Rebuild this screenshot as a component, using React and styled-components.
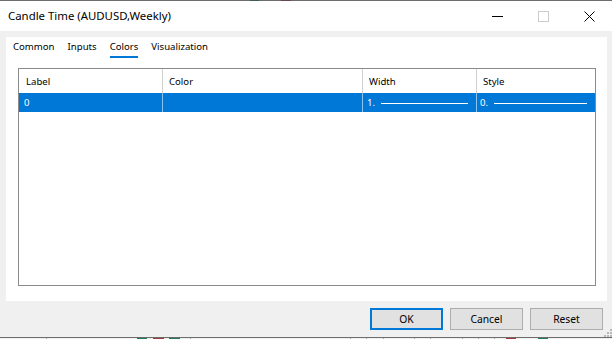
import React from "react"
import styled, { createGlobalStyle } from "styled-components"

const GlobalStyle = createGlobalStyle`
    html, body {
        margin: 0;
        padding: 0;
        background: #f0f0f0;
    }
    * {
        box-sizing: border-box;
    }
`

const Screen = styled.div`
    width: 612px;
    height: 339px;
    overflow: hidden;
    display: flex;
    flex-direction: column;
    background: #f0f0f0;
    font-family: "Noto Sans", "Open Sans", sans-serif;
    font-size: 9.6px;
    color: #000;
`

const EdgeLine = styled.div`
    height: 1px;
    flex: none;
    display: flex;
    background: #6d6d6d;
`

const TitleBar = styled.div`
    height: 30px;
    flex: none;
    display: flex;
    align-items: center;
    background: #fff;
    padding-left: 8px;
`

const Title = styled.span`
    flex: 1;
    font-size: 11.4px;
    padding-bottom: 1px;
`

const WinButton = styled.div`
    width: 46px;
    height: 30px;
    display: flex;
    align-items: center;
    justify-content: center;
`

const Body = styled.div`
    flex: 1;
    display: flex;
    flex-direction: column;
    padding: 6px 5px 0 6px;
`

const Panel = styled.div`
    height: 264px;
    background: #fff;
    display: flex;
    flex-direction: column;
`

const Tabs = styled.div`
    display: flex;
    align-items: flex-start;
    gap: 13px;
    padding: 3px 0 0 7px;
    height: 31px;
`

const Tab = styled.div`
    height: 18px;
    line-height: 14px;
    border-bottom: 2px solid ${p => (p.$active ? "#0078d7" : "transparent")};
`

const Table = styled.div`
    margin: 0 11px 0 12px;
    height: 218px;
    border: 1px solid #8a8a8a;
`

const Row = styled.div`
    display: grid;
    grid-template-columns: 143px 200px 114px 1fr;
    height: ${p => p.$h}px;
    background: ${p => (p.$selected ? "#0078d7" : "#fff")};
    color: ${p => (p.$selected ? "#fff" : "#000")};
`

const Cell = styled.div`
    display: flex;
    align-items: center;
    gap: 6px;
    padding-left: ${p => p.$pad || 6}px;
    padding-right: 8px;
    border-left: 1px solid ${p => (p.$first ? "transparent" : p.$selected ? "#8cc2ec" : "#cfcfcf")};
`

const LineSample = styled.div`
    flex: 1;
    height: 1px;
    background: #fff;
    margin-top: 1px;
`

const Footer = styled.div`
    flex: 1;
    display: flex;
    justify-content: flex-end;
    gap: 7px;
    padding: 7px 4px 0 0;
`

const Button = styled.button`
    width: 73px;
    height: 22px;
    background: #e1e1e1;
    border: ${p => (p.$default ? "2px solid #0078d7" : "1px solid #adadad")};
    font-family: inherit;
    font-size: 10.3px;
    color: #000;
    padding: 0;
`

const BottomStrip = styled.div`
    height: 2px;
    flex: none;
    border-top: 1px solid #6d6d6d;
    display: flex;
    position: relative;
`

const Grip = styled.svg`
    position: absolute;
    right: 0;
    bottom: 2px;
`

const Mark = styled.div`
    flex: none;
    width: ${p => p.$w}px;
    margin-left: ${p => p.$x}px;
    background: ${p => p.$c};
`

const bull = "#1f7a60"
const bear = "#a33a3a"
const wick = "#9fb5a8"

// chart pieces peeking above and below the dialog: [gap before, width, colour]
const bottomMarks = [
    [46, 1, wick], [90, 10, bull], [6, 11, bear], [5, 11, bull], [10, 1, wick],
    [159, 1, wick], [15, 1, wick], [16, 1, wick], [30, 1, wick], [15, 1, wick],
    [31, 1, wick], [15, 1, wick], [15, 1, wick], [11, 10, bear], [22, 10, bull],
]

const topMarks = [
    [250, 9, "#3f5d50"], [22, 10, "#6b4450"],
]

const headers = ["Label", "Color", "Width", "Style"]

export default function App() {
    return (
        <Screen>
            <GlobalStyle />
            <EdgeLine>
                {topMarks.map(([x, w, c], i) => (
                    <Mark key={i} $x={x} $w={w} $c={c} />
                ))}
            </EdgeLine>
            <TitleBar>
                <Title>Candle Time (AUDUSD,Weekly)</Title>
                <WinButton>
                    <svg width="11" height="11" viewBox="0 0 11 11">
                        <line x1="0" y1="5.5" x2="11" y2="5.5" stroke="#000" strokeWidth="1" />
                    </svg>
                </WinButton>
                <WinButton>
                    <svg width="11" height="11" viewBox="0 0 11 11">
                        <rect x="0.5" y="0.5" width="10" height="10" fill="none" stroke="#cccccc" strokeWidth="1" />
                    </svg>
                </WinButton>
                <WinButton>
                    <svg width="11" height="11" viewBox="0 0 11 11">
                        <path d="M0.5 0.5 L10.5 10.5 M10.5 0.5 L0.5 10.5" stroke="#000" strokeWidth="1" />
                    </svg>
                </WinButton>
            </TitleBar>
            <Body>
                <Panel>
                    <Tabs>
                        <Tab>Common</Tab>
                        <Tab>Inputs</Tab>
                        <Tab $active>Colors</Tab>
                        <Tab>Visualization</Tab>
                    </Tabs>
                    <Table>
                        <Row $h={24}>
                            {headers.map((h, i) => (
                                <Cell key={h} $first={i === 0}>{h}</Cell>
                            ))}
                        </Row>
                        <Row $h={19} $selected>
                            <Cell $first $selected $pad={4}>0</Cell>
                            <Cell $selected />
                            <Cell $selected $pad={4}>1.<LineSample /></Cell>
                            <Cell $selected $pad={3}>0.<LineSample /></Cell>
                        </Row>
                    </Table>
                </Panel>
                <Footer>
                    <Button $default>OK</Button>
                    <Button>Cancel</Button>
                    <Button>Reset</Button>
                </Footer>
            </Body>
            <BottomStrip>
                {bottomMarks.map(([x, w, c], i) => (
                    <Mark key={i} $x={x} $w={w} $c={c} />
                ))}
                <Grip width="10" height="10" viewBox="0 0 10 10">
                    {[[8, 0], [5, 3], [8, 3], [2, 6], [5, 6], [8, 6]].map(([x, y]) => (
                        <rect key={`${x}-${y}`} x={x} y={y + 2} width="2" height="2" fill="#b8b8b8" />
                    ))}
                </Grip>
            </BottomStrip>
        </Screen>
    )
}
